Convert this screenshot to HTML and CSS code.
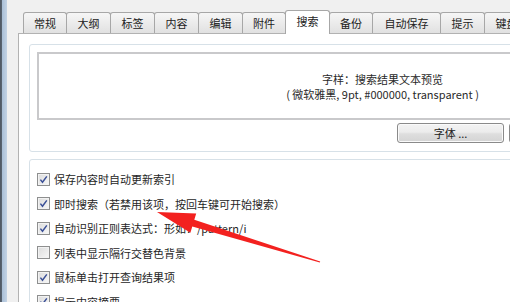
FILE: index.html
```html
<!DOCTYPE html>
<html lang="zh-CN">
<head>
<meta charset="utf-8">
<link rel="stylesheet" href="styles.css">
</head>
<body>
<div class="window">
  <div class="edge"></div>
  <div class="dialog">
    <div class="tabs">
      <div class="tab s43">常规</div>
      <div class="tab">大纲</div>
      <div class="tab">标签</div>
      <div class="tab">内容</div>
      <div class="tab">编辑</div>
      <div class="tab s43">附件</div>
      <div class="tab active">搜索</div>
      <div class="tab s43">备份</div>
      <div class="tab s68">自动保存</div>
      <div class="tab">提示</div>
      <div class="tab">键盘</div>
    </div>
    <div class="page">
      <div class="group g1">
        <div class="preview">
          <div>字样：搜索结果文本预览</div>
          <div>( 微软雅黑, 9pt, #000000, transparent )</div>
        </div>
        <div class="btn-row">
          <button class="btn">字体 ...</button>
          <button class="btn">默认</button>
          <button class="btn">重置</button>
        </div>
      </div>
      <div class="group g2">
        <div class="opt"><span class="cb"><svg class="tick" viewBox="0 0 9 9"><path d="M1.4 4.6 L3.5 7.2 L7.8 1.4"/></svg></span><span>保存内容时自动更新索引</span></div>
        <div class="opt"><span class="cb"><svg class="tick" viewBox="0 0 9 9"><path d="M1.4 4.6 L3.5 7.2 L7.8 1.4"/></svg></span><span>即时搜索（若禁用该项，按回车键可开始搜索）</span></div>
        <div class="opt"><span class="cb"><svg class="tick" viewBox="0 0 9 9"><path d="M1.4 4.6 L3.5 7.2 L7.8 1.4"/></svg></span><span>自动识别正则表达式：形如：/pattern/i</span></div>
        <div class="opt"><span class="cb"></span><span>列表中显示隔行交替色背景</span></div>
        <div class="opt"><span class="cb"><svg class="tick" viewBox="0 0 9 9"><path d="M1.4 4.6 L3.5 7.2 L7.8 1.4"/></svg></span><span>鼠标单击打开查询结果项</span></div>
        <div class="opt"><span class="cb"><svg class="tick" viewBox="0 0 9 9"><path d="M1.4 4.6 L3.5 7.2 L7.8 1.4"/></svg></span><span>提示内容摘要</span></div>
      </div>
    </div>
  </div>
  <svg class="arrow" viewBox="0 0 510 302" width="510" height="302">
    <polygon points="157,212 196.2,213.5 194.3,219.8 320.2,261.4 319.8,262.6 192.3,226.4 190.4,232.7" fill="#f3211f"/>
  </svg>
</div>
</body>
</html>
```
FILE: styles.css
```css
html, body {
  margin: 0;
  padding: 0;
}
body {
  width: 510px;
  height: 302px;
  overflow: hidden;
  background: #f0f0f0;
  font-family: "Noto Sans CJK SC", "Microsoft YaHei", sans-serif;
  font-size: 11px;
  color: #262626;
}
.window {
  position: relative;
  display: flex;
  height: 302px;
}
.edge {
  flex: 0 0 7px;
  background: linear-gradient(to right, #4e5763 0, #5b6673 2px, #a9bfd7 2px, #c3d3e5 7px);
}
.dialog {
  flex: 0 0 900px;
  padding: 10px 0 0 11px;
  display: flex;
  flex-direction: column;
}
.tabs {
  display: flex;
  align-items: flex-end;
  height: 23px;
  padding-left: 5px;
}
.tab {
  box-sizing: border-box;
  width: 45px;
  height: 21px;
  margin-right: -1px;
  border: 1px solid #a7a7a7;
  border-bottom: none;
  border-radius: 3px 3px 0 0;
  background: linear-gradient(#f6f6f6, #e1e1e1);
  display: flex;
  align-items: center;
  justify-content: center;
  line-height: 1;
  color: #222;
}
.tab.s43 { width: 44px; }
.tab.s68 { width: 69px; }
.tab.active {
  position: relative;
  z-index: 1;
  height: 24px;
  margin-bottom: -1px;
  background: #fff;
  padding-bottom: 2px;
}
.page {
  flex: 1;
  background: #fff;
  border-top: 1px solid #b2b2b2;
  border-left: 1px solid #b2b2b2;
  padding: 10px 0 0 10px;
}
.group {
  box-sizing: border-box;
  width: 707px;
  border: 1px solid #d7e1e8;
  border-radius: 3px;
}
.g1 {
  height: 108px;
  padding: 7px 7px 8px 7px;
}
.preview {
  box-sizing: border-box;
  height: 68px;
  border: 2px solid #c9c9cb;
  display: flex;
  flex-direction: column;
  align-items: center;
  justify-content: center;
  line-height: 15px;
  padding-top: 2px;
  color: #2a2a2a;
}
.btn-row {
  display: flex;
  justify-content: flex-end;
  gap: 5px;
  margin-top: 3px;
}
.btn {
  box-sizing: border-box;
  width: 107px;
  height: 20px;
  padding: 0;
  border: 1px solid #8a8a8a;
  border-radius: 3px;
  background: linear-gradient(#f3f3f3 0%, #ececec 45%, #dedede 55%, #d4d4d4 100%);
  box-shadow: inset 0 0 0 1px #fafafa;
  font: inherit;
  color: #222;
  line-height: 1;
}
.g2 {
  margin-top: 7px;
  height: 200px;
  padding: 7px;
}
.opt {
  display: flex;
  align-items: center;
  gap: 4px;
  height: 24.5px;
  white-space: nowrap;
}
.cb {
  box-sizing: border-box;
  flex: 0 0 13px;
  width: 13px;
  height: 13px;
  border: 1px solid #8e8f8f;
  background: linear-gradient(135deg, #dcdcdc, #f7f7f7);
  box-shadow: inset 0 0 0 1px #f2f2f2;
  display: flex;
  align-items: center;
  justify-content: center;
}
.tick {
  width: 9px;
  height: 9px;
}
.tick path {
  fill: none;
  stroke: #3a4f96;
  stroke-width: 1.5;
}
.arrow {
  position: absolute;
  left: 0;
  top: 0;
  pointer-events: none;
}
```
